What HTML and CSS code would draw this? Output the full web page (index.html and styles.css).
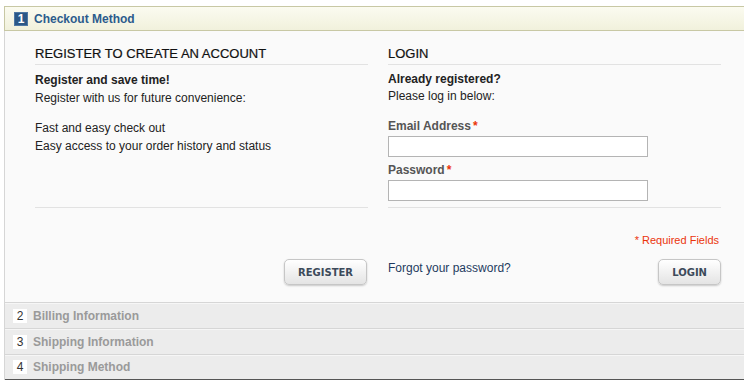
FILE: index.html
```html
<!DOCTYPE html>
<html lang="en">
  <head>
    <meta charset="UTF-8" />
    <meta name="viewport" content="width=device-width, initial-scale=1.0" />
    <title>Checkout</title>
    <link rel="stylesheet" href="styles.css">
  </head>
  <body>
    <ol id="checkout">
      <li class="section active">
        <div class="step-title">
          <span class="number">1</span>
          <h2>Checkout Method</h2>
        </div>
        <div class="step">
          <div class="col-set">
            <div class="col">
              <h3>Register to Create an Account</h3>
              <p class="lines"><strong>Register and save time!</strong><br>Register with us for future convenience:</p>
              <p class="lines">Fast and easy check out<br>Easy access to your order history and status</p>
            </div>
            <div class="col">
              <h3>Login</h3>
              <p class="lines small"><strong>Already registered?</strong><br>Please log in below:</p>
              <form class="form-list">
                <label for="email">Email Address<em>*</em></label>
                <input type="text" id="email">
                <label for="pass">Password<em>*</em></label>
                <input type="password" id="pass">
              </form>
            </div>
            <div class="buttons-set left">
              <button type="button" class="button">REGISTER</button>
            </div>
            <div class="buttons-set">
              <p class="required">* Required Fields</p>
              <div class="login-row">
                <a href="#">Forgot your password?</a>
                <button type="button" class="button">LOGIN</button>
              </div>
            </div>
          </div>
        </div>
      </li>
      <li class="section">
        <div class="step-title"><span class="number">2</span><h2>Billing Information</h2></div>
      </li>
      <li class="section">
        <div class="step-title"><span class="number">3</span><h2>Shipping Information</h2></div>
      </li>
      <li class="section last">
        <div class="step-title"><span class="number">4</span><h2>Shipping Method</h2></div>
      </li>
    </ol>
  </body>
</html>
```

FILE: styles.css
```css
* {
  margin: 0;
  padding: 0;
  box-sizing: border-box;
}
body {
  font-family: "Liberation Sans", Arial, sans-serif;
  font-size: 12px;
  color: #222;
  background: #fff;
  overflow: hidden;
}
a {
  color: #1e3a5f;
  text-decoration: none;
}
#checkout {
  list-style: none;
  margin: 6px 0 0 4px;
  border-left: 1px solid #d6d6d6;
}
.section .step-title {
  display: flex;
  align-items: center;
  height: 26px;
  padding-left: 8px;
  background: #ececec;
  border-top: 1px solid #d6d6d6;
  box-shadow: inset 0 1px 0 #f6f6f6;
}
.section .step-title h2 {
  font-size: 12px;
  font-weight: bold;
  color: #9a9a9a;
  margin-left: 6px;
}
.section .number {
  display: flex;
  align-items: center;
  justify-content: center;
  width: 14px;
  height: 14px;
  background: #fff;
  color: #333;
  font-size: 12px;
}
.section.last .step-title {
  height: 27px;
  border-bottom: 2px solid #555;
}
.section.active .step-title {
  height: 25px;
  margin-left: -1px;
  padding-left: 9px;
  border: 1px solid #c8c8a4;
  border-right: 0;
  background: linear-gradient(#fbfbf0, #f1f1dc);
  box-shadow: none;
}
.section.active .step-title h2 {
  color: #2c5b8c;
}
.section.active .number {
  background: #2b5887;
  color: #fff;
  font-weight: bold;
  outline: 1px solid #4d77a3;
  outline-offset: -1px;
}
.step {
  background: #fafafa;
  padding: 15px 0 17px 30px;
}
.col-set {
  display: grid;
  grid-template-columns: 333px 333px;
  column-gap: 20px;
}
h3 {
  font-size: 13px;
  font-weight: normal;
  text-transform: uppercase;
  color: #111;
  line-height: 16px;
  padding-bottom: 2px;
  border-bottom: 1px solid #e2e2e2;
  margin-bottom: 6px;
  -webkit-text-stroke: 0.2px #111;
}
.lines {
  line-height: 18px;
  margin-bottom: 12px;
}
.lines.small {
  line-height: 17px;
  margin-bottom: 13px;
}
.form-list label {
  display: block;
  font-weight: bold;
  color: #555;
  line-height: 17px;
}
.form-list label em {
  font-style: normal;
  color: #eb340a;
  margin-left: 2px;
}
.form-list input {
  display: block;
  width: 260px;
  height: 21px;
  border: 1px solid #b4b4b4;
  background: #fff;
  margin: 1px 0 5px;
}
.buttons-set {
  margin-top: 1px;
  border-top: 1px solid #e2e2e2;
}
.buttons-set.left {
  display: flex;
  flex-direction: column;
  align-items: flex-end;
  justify-content: flex-end;
}
.required {
  text-align: right;
  font-size: 11px;
  line-height: 14px;
  color: #eb340a;
  margin: 25px 2px 12px 0;
}
.login-row {
  display: flex;
  justify-content: space-between;
  align-items: flex-start;
}
.login-row a {
  line-height: 17px;
  padding-top: 1px;
}
.button {
  height: 26px;
  padding: 0 13px;
  border: 1px solid #c6c6c6;
  border-radius: 5px;
  background: linear-gradient(#ffffff, #e4e4e4);
  box-shadow: 0 1px 2px rgba(0, 0, 0, 0.2);
  font-family: "DejaVu Sans", Verdana, sans-serif;
  font-size: 10px;
  font-weight: bold;
  color: #3c4a5a;
  cursor: pointer;
}
.buttons-set.left .button {
  margin-right: 1px;
}
```
